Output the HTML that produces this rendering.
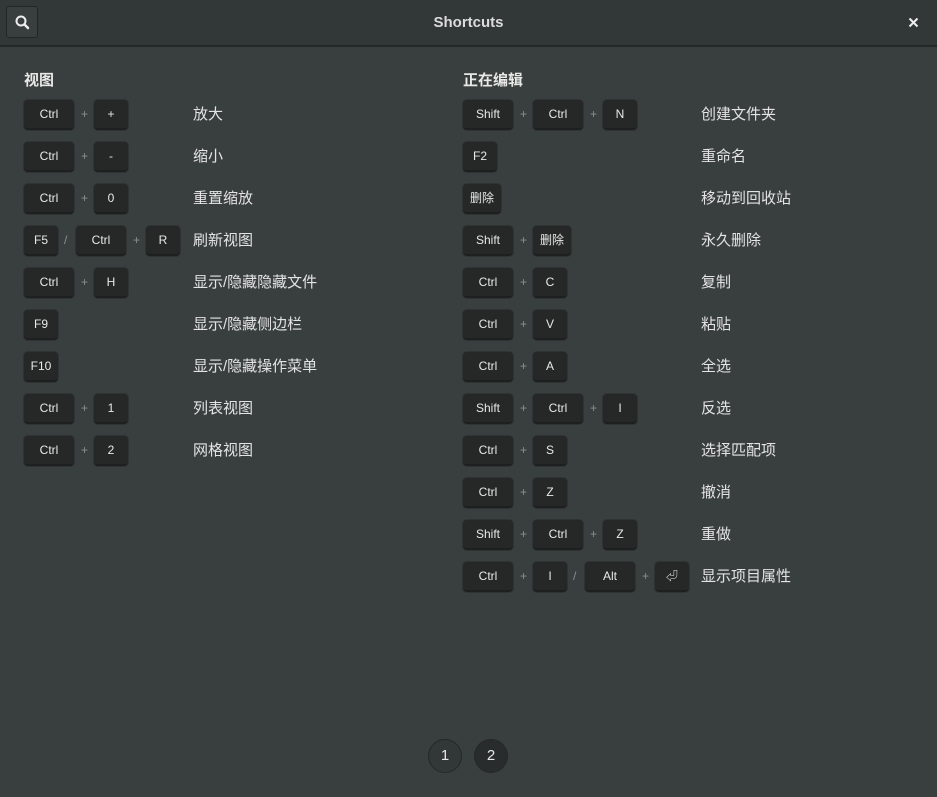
<html><head><style>
body{margin:0;width:937px;height:797px;background:#393f3f;font-family:"Liberation Sans","Noto Sans CJK SC",sans-serif;position:relative;overflow:hidden;color:#e8e8e7}
.hd{position:absolute;left:0;top:0;width:937px;height:45px;background:#323737;border-bottom:2px solid #242828}
.t{position:absolute;left:0;width:937px;top:14px;text-align:center;font-weight:bold;font-size:15px;color:#dcdcdc}
.sb{position:absolute;left:6px;top:6px;width:32px;height:32px;box-sizing:border-box;border:1px solid #222626;border-radius:3px;background:#393e3e}
.k{position:absolute;height:30px;box-sizing:border-box;background:#262828;border-radius:4px;border-bottom:2px solid #1e2020;box-shadow:0 0 0 1px #2f3333;font-size:12px;line-height:29px;text-align:center;color:#e8e8e8}
.s{position:absolute;font-size:12px;color:#8a8f8f;line-height:29px}
.l{position:absolute;font-size:15px;line-height:29px;color:#e4e4e4}
.h{position:absolute;font-size:15px;font-weight:bold;top:69px}
.c{position:absolute;top:739px;width:34px;height:34px;border-radius:50%;box-sizing:border-box;border:1px solid #232727;text-align:center;line-height:32px;font-size:15px}
</style></head><body>
<div class="hd"><div class="sb"><svg width="30" height="30" viewBox="0 0 30 30"><circle cx="14" cy="14" r="4.5" fill="none" stroke="#eee" stroke-width="2"/><path d="M17.5 17.5 L21 21" stroke="#eee" stroke-width="2.5" stroke-linecap="round"/></svg></div>
<div class="t">Shortcuts</div>
<svg style="position:absolute;left:908px;top:17px" width="11" height="11" viewBox="0 0 11 11"><path d="M1.5 1.5L9.5 9.5M9.5 1.5L1.5 9.5" stroke="#eee" stroke-width="2"/></svg></div>
<div class="h" style="left:24px">视图</div>
<div class="h" style="left:463px">正在编辑</div>
<div id="r"></div>
<div class="c" style="left:428px;background:#323737">1</div>
<div class="c" style="left:474px;background:#282c2c">2</div>
<script>
var L=[[["Ctrl",50],"+",["+",34]],[["Ctrl",50],"+",["-",34]],[["Ctrl",50],"+",["0",34]],[["F5",34],"/",["Ctrl",50],"+",["R",34]],[["Ctrl",50],"+",["H",34]],[["F9",34]],[["F10",34]],[["Ctrl",50],"+",["1",34]],[["Ctrl",50],"+",["2",34]]];
var LL=["放大","缩小","重置缩放","刷新视图","显示/隐藏隐藏文件","显示/隐藏侧边栏","显示/隐藏操作菜单","列表视图","网格视图"];
var R=[[["Shift",50],"+",["Ctrl",50],"+",["N",34]],[["F2",34]],[["删除",38]],[["Shift",50],"+",["删除",38]],[["Ctrl",50],"+",["C",34]],[["Ctrl",50],"+",["V",34]],[["Ctrl",50],"+",["A",34]],[["Shift",50],"+",["Ctrl",50],"+",["I",34]],[["Ctrl",50],"+",["S",34]],[["Ctrl",50],"+",["Z",34]],[["Shift",50],"+",["Ctrl",50],"+",["Z",34]],[["Ctrl",50],"+",["I",34],"/",["Alt",50],"+",["⏎",34]]];
var RL=["创建文件夹","重命名","移动到回收站","永久删除","复制","粘贴","全选","反选","选择匹配项","撤消","重做","显示项目属性"];
var h="";
function col(rows,labs,x0,lx){rows.forEach(function(r,i){var y=100+i*42,x=x0;r.forEach(function(e){if(typeof e=="string"){var g=e=="/"?18:20;h+='<div class="s" style="left:'+(x+g/2-3)+'px;top:'+y+'px">'+e+'</div>';x+=g;}else{h+='<div class="k" style="left:'+x+'px;top:'+y+'px;width:'+e[1]+'px">'+e[0]+'</div>';x+=e[1];}});h+='<div class="l" style="left:'+lx+'px;top:'+y+'px">'+labs[i]+'</div>';});}
col(L,LL,24,193);col(R,RL,463,701);
document.getElementById("r").innerHTML=h;
</script></body></html>
